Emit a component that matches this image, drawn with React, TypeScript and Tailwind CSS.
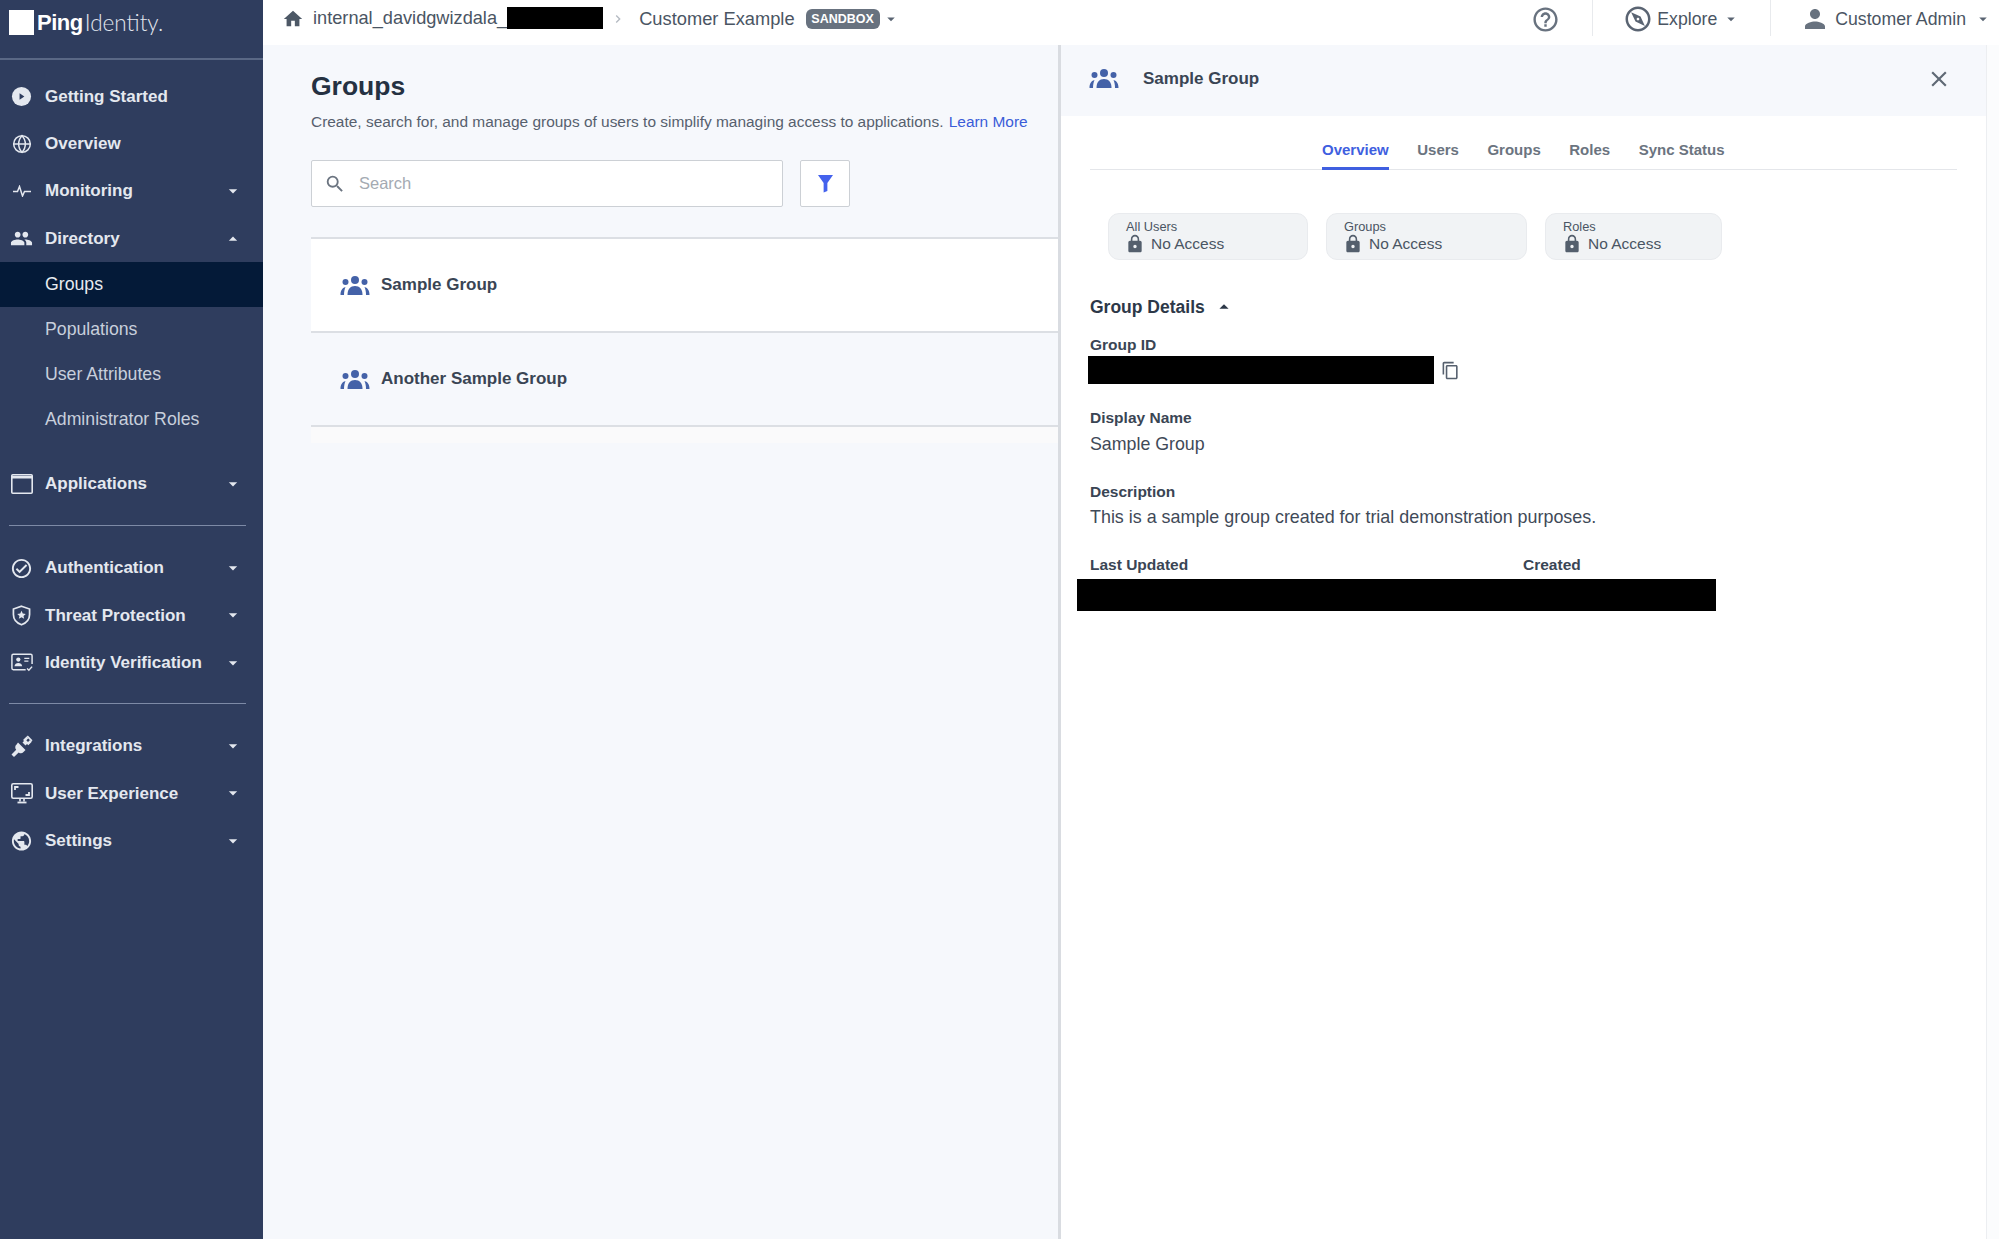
import {
  MdArrowDropDown, MdArrowDropUp, MdChevronRight, MdClose, MdHelpOutline, MdHome, MdLock, MdOutlineCheckCircle,
  MdOutlineContentCopy, MdOutlineExplore, MdPeople, MdPerson, MdPublic, MdSearch,
} from 'react-icons/md';
import { Globe } from 'lucide-react';
import type { ReactNode } from 'react';

function PlayIcon() {
  return (
    <svg viewBox="0 0 22 22" className="w-[21px] h-[21px]">
      <circle cx="11" cy="11" r="10" fill="currentColor" />
      <path d="M9 7.500 14 11 9 14.500Z" fill="#2f3d5e" />
    </svg>
  );
}

function PulseIcon() {
  return (
    <svg viewBox="0 0 18 12" className="w-[18px] h-[12px]" fill="none" stroke="currentColor" strokeWidth="1.500">
      <path d="M0 6.500h4.500l2-5 3 9.500 2-4.500H18" />
    </svg>
  );
}

function AppIcon() {
  return (
    <svg viewBox="0 0 22 20" className="w-[22px] h-[20px]" fill="none" stroke="currentColor">
      <rect x="0.800" y="0.800" width="20.400" height="18.400" rx="1" strokeWidth="1.600" />
      <path d="M1 3.200H21" strokeWidth="2.600" />
    </svg>
  );
}

function ShieldIcon() {
  return (
    <svg viewBox="0 0 20 22" className="w-[19px] h-[21px]" fill="none">
      <path d="M10 1.200 18.500 4.200V10c0 5-3.400 9-8.500 10.800C4.900 19 1.500 15 1.500 10V4.200Z" stroke="currentColor" strokeWidth="1.800" />
      <path d="m10 6 1.300 3 3.200.3-2.400 2.100.7 3.100L10 12.900l-2.800 1.600.7-3.100-2.400-2.100 3.200-.3Z" fill="currentColor" />
    </svg>
  );
}

function IdIcon() {
  return (
    <svg viewBox="0 0 24 20" className="w-[22px] h-[19px]" fill="none" stroke="currentColor">
      <path d="M16 17.800H2.500a1.500 1.500 0 0 1-1.500-1.500V2.500A1.500 1.500 0 0 1 2.500 1h19A1.500 1.500 0 0 1 23 2.500v9" strokeWidth="1.600" />
      <circle cx="8" cy="6.800" r="2.300" fill="currentColor" stroke="none" />
      <path d="M3.800 14c.3-2.400 2-3.400 4.200-3.400s3.900 1 4.200 3.400Z" fill="currentColor" stroke="none" />
      <path d="M14.500 5.500H20M14.500 8.500H19" strokeWidth="1.400" />
      <path d="m17.500 16.500 2 2 3.500-4" strokeWidth="1.600" />
    </svg>
  );
}

function PlugIcon() {
  return (
    <svg viewBox="0 0 22 22" className="w-[22px] h-[22px]" fill="currentColor">
      <path d="M7 7.500 14.500 15l-2 2a3.500 3.500 0 0 1-4.800.4L3 22 .5 19.500l4.700-4.700a3.500 3.500 0 0 1 .4-5.200Z" />
      <path d="m11.500 7.500 3-3 3 3-3 3Z" />
      <path d="m12 5 3.500-3.500 1.800 1.800L14 6.800ZM15.500 8.500 19 5l1.800 1.800-3.500 3.500Z" />
      <path d="m16.800.5 4.700 4.700-1.200 1.200-4.700-4.700Z" />
    </svg>
  );
}

function MonitorIcon() {
  return (
    <svg viewBox="0 0 22 21" className="w-[22px] h-[21px]" fill="none" stroke="currentColor">
      <rect x="0.800" y="0.800" width="20.400" height="14.400" rx="1.500" strokeWidth="1.600" />
      <path d="M4 7V4h3.500M18 9v3h-3.500" strokeWidth="1.800" />
      <path d="M9 15.500v3M13 15.500v3" strokeWidth="1.600" />
      <path d="M6.500 19.500h9" strokeWidth="1.800" />
    </svg>
  );
}

function FunnelIcon() {
  return (
    <svg viewBox="0 0 16 20" className="w-[15px] h-[19px]" fill="#4462ed">
      <path d="M0 1h16L10 9.500V18l-4 1.500V9.500Z" />
    </svg>
  );
}

// three people, centre one larger, as used for group rows and the panel header
function GroupIcon() {
  return (
    <svg viewBox="0 0 30 19" className="w-[30px] h-[19px]" fill="#4462a8">
      <circle cx="15" cy="4" r="4" />
      <circle cx="5.500" cy="6" r="3" />
      <circle cx="24.500" cy="6" r="3" />
      <path d="M7.500 19c0-6 3-9 7.500-9s7.500 3 7.500 9Z" />
      <path d="M.5 19c0-4 1.300-7 5-8-1 2.200-1.500 5-1.500 8Z" />
      <path d="M29.500 19c0-4-1.300-7-5-8 1 2.200 1.500 5 1.500 8Z" />
    </svg>
  );
}

function NavRow({ icon, label, caret }: { icon: ReactNode; label: string; caret?: 'up' | 'down' }) {
  return (
    <div className="flex items-center h-[47.300px] pl-[10px] pr-[20px] text-[#e4e8ef]">
      <span className="w-[23px] mr-[12px] flex items-center justify-center">{icon}</span>
      <span className="flex-1 text-[17px] font-bold">{label}</span>
      {caret === 'down' && <MdArrowDropDown className="w-[20px] h-[20px]" />}
      {caret === 'up' && <MdArrowDropUp className="w-[20px] h-[20px]" />}
    </div>
  );
}

function SubRow({ label, active }: { label: string; active?: boolean }) {
  return (
    <div className={active
      ? 'flex items-center h-[45px] pl-[45px] text-[17.700px] bg-[#041a38] text-[#e8ebf0]'
      : 'flex items-center h-[45px] pl-[45px] text-[17.700px] text-[#c8cfdc]'}
    >
      {label}
    </div>
  );
}

function Sidebar() {
  return (
    <aside className="w-[263px] shrink-0 bg-[#2f3d5e] flex flex-col">
      <div className="h-[60px] border-b-2 border-[#5a6885] flex items-start pt-[10px] pl-[9px]">
        <div className="w-[25px] h-[25px] bg-white mr-[3px]" />
        <span className="text-[22px] leading-[25px] font-bold text-white tracking-[-0.5px]">Ping</span>
        <span className="text-[22.500px] leading-[25px] text-[#e2e6ee] ml-[2px] font-['Lato',sans-serif] font-light">Identity.</span>
      </div>
      <div className="pt-[13px]">
        <NavRow icon={<PlayIcon />} label="Getting Started" />
        <NavRow icon={<Globe className="w-[20px] h-[20px]" strokeWidth={1.8} />} label="Overview" />
        <NavRow icon={<PulseIcon />} label="Monitoring" caret="down" />
        <NavRow icon={<MdPeople className="w-[23px] h-[23px]" />} label="Directory" caret="up" />
        <SubRow label="Groups" active />
        <SubRow label="Populations" />
        <SubRow label="User Attributes" />
        <SubRow label="Administrator Roles" />
      </div>
      <div className="mt-[18px] pb-[18px]">
        <NavRow icon={<AppIcon />} label="Applications" caret="down" />
      </div>
      <div className="mx-[9px] mr-[17px] border-t border-[#7d8aa6]" />
      <div className="pt-[18px] pb-[17px]">
        <NavRow icon={<MdOutlineCheckCircle className="w-[23px] h-[23px]" />} label="Authentication" caret="down" />
        <NavRow icon={<ShieldIcon />} label="Threat Protection" caret="down" />
        <NavRow icon={<IdIcon />} label="Identity Verification" caret="down" />
      </div>
      <div className="mx-[9px] mr-[17px] border-t border-[#7d8aa6]" />
      <div className="pt-[18px]">
        <NavRow icon={<PlugIcon />} label="Integrations" caret="down" />
        <NavRow icon={<MonitorIcon />} label="User Experience" caret="down" />
        <NavRow icon={<MdPublic className="w-[24px] h-[24px]" />} label="Settings" caret="down" />
      </div>
    </aside>
  );
}

function TopBar() {
  return (
    <header className="h-[45px] shrink-0 bg-white flex items-center pb-[7px] text-[#4a5563]">
      <MdHome className="w-[22px] h-[22px] ml-[19px] text-[#4d5866]" />
      <span className="ml-[9px] text-[18.200px]">internal_davidgwizdala_</span>
      <div className="w-[96px] h-[22px] -mt-[2px] bg-black" />
      <MdChevronRight className="w-[16px] h-[16px] ml-[7px] text-[#b4bac2]" />
      <span className="ml-[13px] text-[18.300px]">Customer Example</span>
      <span className="ml-[11px] w-[74px] h-[20px] rounded-[6px] bg-[#68727f] text-white text-[12.500px] font-bold flex items-center justify-center">SANDBOX</span>
      <MdArrowDropDown className="w-[18px] h-[18px] ml-[2px] text-[#5a6472]" />
      <MdHelpOutline className="w-[29px] h-[29px] ml-auto text-[#68727f]" />
      <div className="w-px h-[36px] self-start bg-[#e8eaed] ml-[32px]" />
      <MdOutlineExplore className="w-[30px] h-[30px] ml-[30px] text-[#5a6472] -scale-x-100" />
      <span className="ml-[4px] text-[17.700px]">Explore</span>
      <MdArrowDropDown className="w-[18px] h-[18px] ml-[5px] text-[#5a6472]" />
      <div className="w-px h-[36px] self-start bg-[#e8eaed] ml-[30px]" />
      <MdPerson className="w-[30px] h-[30px] ml-[29px] text-[#68727f]" />
      <span className="ml-[5px] text-[17.700px]">Customer Admin</span>
      <MdArrowDropDown className="w-[18px] h-[18px] ml-[8px] mr-[7px] text-[#5a6472]" />
    </header>
  );
}

function GroupRow({ name, active }: { name: string; active?: boolean }) {
  return (
    <div className={active
      ? 'h-[94px] flex items-center pl-[29px] bg-white border-b-2 border-[#dcdfe4]'
      : 'h-[94px] flex items-center pl-[29px] border-b-2 border-[#dcdfe4]'}
    >
      <GroupIcon />
      <span className="ml-[11px] text-[17px] font-bold text-[#3a4554]">{name}</span>
    </div>
  );
}

function GroupList() {
  return (
    <section className="w-[795px] shrink-0 pl-[48px]">
      <h1 className="mt-[24px] text-[26.500px] leading-[34px] font-bold text-[#253142]">Groups</h1>
      <p className="mt-[9px] text-[15.450px] leading-[20px] text-[#56606e] whitespace-nowrap">
        Create, search for, and manage groups of users to simplify managing access to applications. <span className="ml-[1px] text-[#3a5cd8]">Learn More</span>
      </p>
      <div className="mt-[28px] flex items-stretch h-[47px]">
        <div className="w-[472px] bg-white border border-[#ccd0d5] rounded-[2px] flex items-center pl-[12px]">
          <MdSearch className="w-[22px] h-[22px] text-[#6b7480]" />
          <span className="ml-[13px] text-[16.500px] text-[#a4aab2]">Search</span>
        </div>
        <div className="ml-[17px] w-[50px] bg-white border border-[#ccd0d5] rounded-[2px] flex items-center justify-center">
          <FunnelIcon />
        </div>
      </div>
      <div className="mt-[30px] border-t-2 border-[#dcdfe4]">
        <GroupRow name="Sample Group" active />
        <GroupRow name="Another Sample Group" />
        <div className="h-[16px] bg-[#fafafb]" />
      </div>
    </section>
  );
}

function AccessCard({ label, width }: { label: string; width: string }) {
  return (
    <div className={`${width} h-[47px] rounded-[11px] bg-[#f1f3f5] border border-[#e9ebee] pl-[17px] pt-[6px]`}>
      <div className="text-[12.800px] leading-[14px] text-[#4a5563]">{label}</div>
      <div className="flex items-center text-[15.500px] leading-[18px] text-[#4a5563]">
        <MdLock className="w-[20px] h-[20px] -ml-[1px] text-[#545f6d]" />
        <span className="ml-[6px]">No Access</span>
      </div>
    </div>
  );
}

function Tab({ label, active }: { label: string; active?: boolean }) {
  return (
    <div className={active
      ? 'h-[54px] pt-[24px] leading-[20px] text-[15px] font-bold text-[#3f5fe0] border-b-[3px] border-[#3f5fe0] -mb-[1px]'
      : 'h-[54px] pt-[24px] leading-[20px] text-[15px] font-bold text-[#6b7480]'}
    >
      {label}
    </div>
  );
}

function DetailPanel() {
  return (
    <section className="w-[928px] shrink-0 bg-white border-l-[3px] border-[#d9dce1] pb-[40px]">
      <div className="h-[71px] bg-[#f6f8fc] flex items-center pl-[28px] pr-[34px] pb-[4px]">
        <GroupIcon />
        <span className="ml-[24px] text-[17px] font-bold text-[#3a4554] flex-1">Sample Group</span>
        <MdClose className="w-[26px] h-[26px] text-[#5f6975]" />
      </div>
      <div className="ml-[29px] mr-[29px] h-[54px] flex gap-[28.500px] pl-[232px] border-b border-[#e4e6ea]">
        <Tab label="Overview" active />
        <Tab label="Users" />
        <Tab label="Groups" />
        <Tab label="Roles" />
        <Tab label="Sync Status" />
      </div>
      <div className="pl-[29px]">
        <div className="mt-[43px] ml-[18px] flex gap-[18px]">
          <AccessCard label="All Users" width="w-[200px]" />
          <AccessCard label="Groups" width="w-[201px]" />
          <AccessCard label="Roles" width="w-[177px]" />
        </div>
        <div className="mt-[35px] flex items-center h-[24px] text-[#2d3848]">
          <span className="text-[17.500px] font-bold">Group Details</span>
          <MdArrowDropUp className="w-[22px] h-[22px] ml-[8px]" />
        </div>
        <div className="mt-[17px] text-[15.500px] leading-[18px] font-bold text-[#3a4554]">Group ID</div>
        <div className="mt-[2px] -ml-[2px] flex items-center">
          <div className="w-[346px] h-[28px] bg-black" />
          <MdOutlineContentCopy className="w-[19px] h-[19px] ml-[7px] text-[#56606e]" />
        </div>
        <div className="mt-[25px] text-[15.500px] leading-[18px] font-bold text-[#3a4554]">Display Name</div>
        <div className="mt-[5px] text-[17.800px] leading-[24px] text-[#3f4a58]">Sample Group</div>
        <div className="mt-[27px] text-[15.500px] leading-[18px] font-bold text-[#3a4554]">Description</div>
        <div className="mt-[4px] text-[17.900px] leading-[24px] text-[#3f4a58]">This is a sample group created for trial demonstration purposes.</div>
        <div className="mt-[27px] grid grid-cols-[433px_1fr] text-[15.500px] leading-[18px] font-bold text-[#3a4554]">
          <div>Last Updated</div>
          <div>Created</div>
        </div>
        <div className="mt-[5px] -ml-[13px] w-[639px] h-[32px] bg-black" />
      </div>
    </section>
  );
}

export default function App() {
  return (
    <div className="flex min-h-screen bg-[#f6f8fc] [font-family:'Liberation_Sans',sans-serif]">
      <Sidebar />
      <main className="flex-1 flex flex-col">
        <TopBar />
        <div className="flex-1 flex">
          <GroupList />
          <DetailPanel />
          <div className="flex-1 bg-[#fbfcfd] border-l border-[#eceef1]" />
        </div>
      </main>
    </div>
  );
}
